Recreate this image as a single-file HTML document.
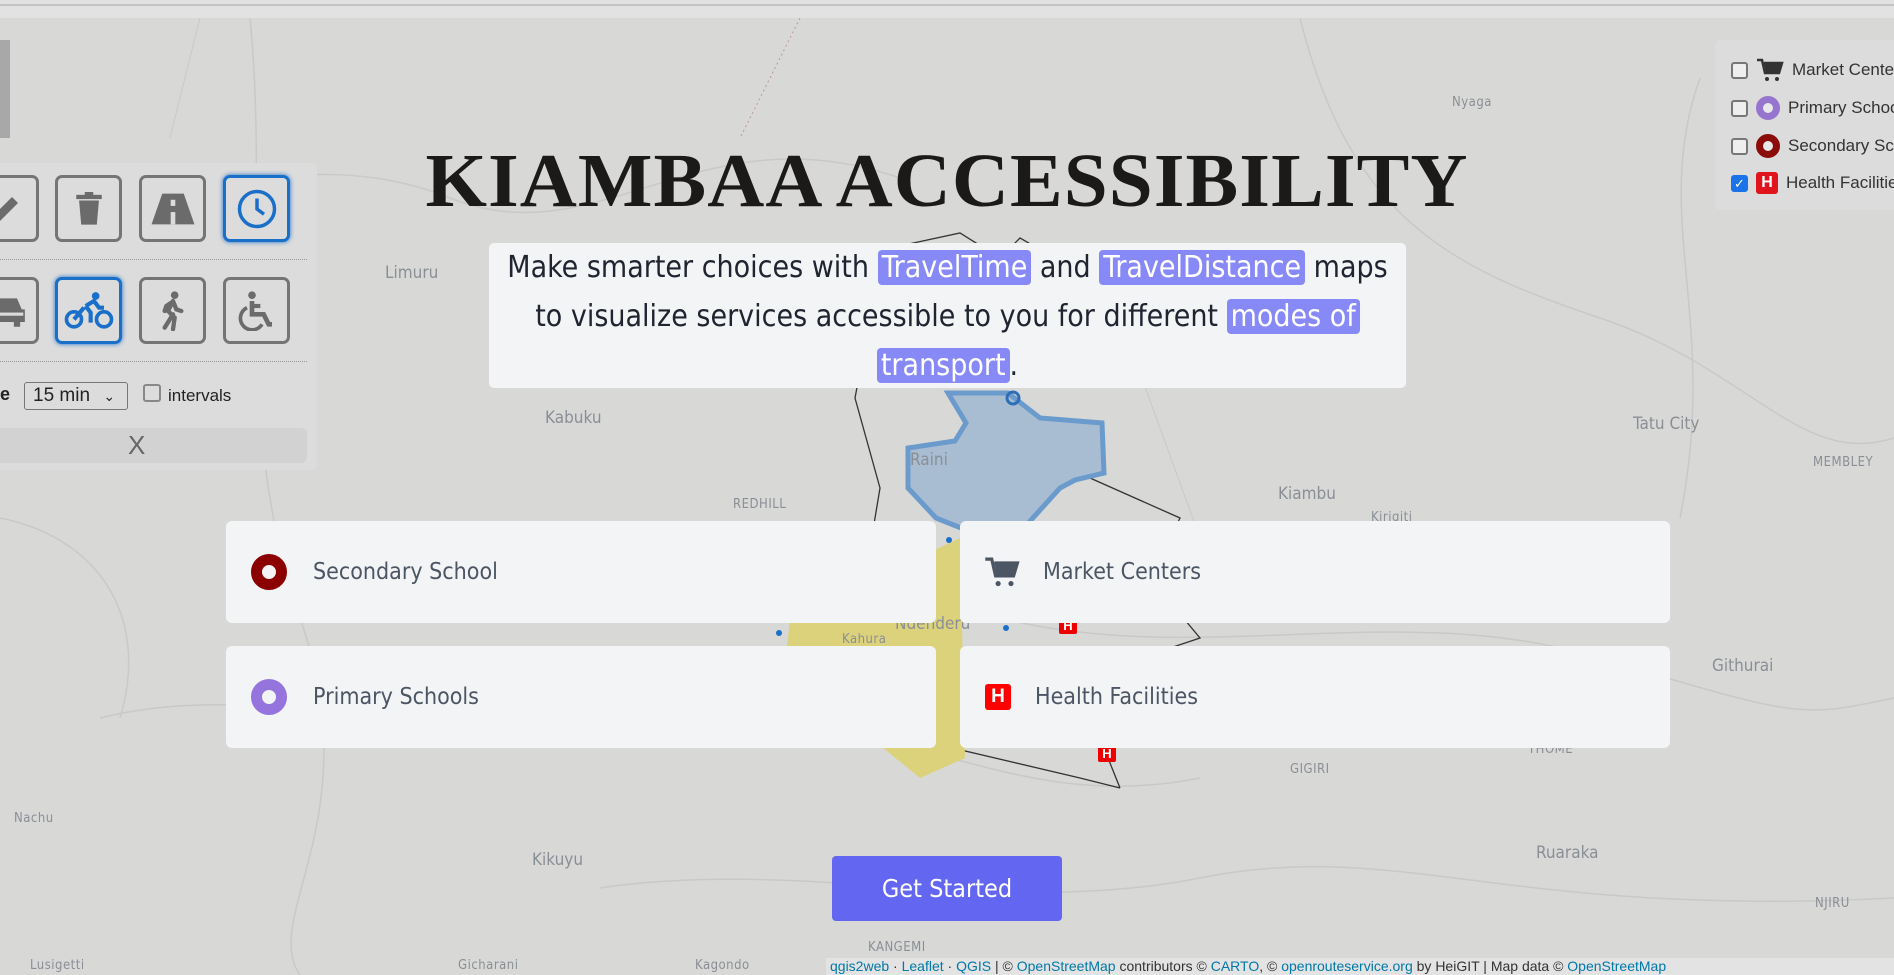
<!DOCTYPE html>
<html><head><meta charset="utf-8"><style>
*{margin:0;padding:0;box-sizing:border-box}
body{width:1894px;height:975px;overflow:hidden;background:#d8d8d6;font-family:"Liberation Sans",sans-serif;position:relative}
.abs{position:absolute}
.lbl{position:absolute;color:#8a8f96;font-size:17px;font-family:"DejaVu Sans Condensed","Liberation Sans",sans-serif}
.sm{font-size:13px;letter-spacing:.5px}
.btn{position:absolute;width:67px;height:67px;border:3px solid #757575;border-radius:7px;background:#dcdcdc;display:flex;align-items:center;justify-content:center}
.btn.on{border-color:#1a6fc9;box-shadow:0 0 5px #1a6fc9}
.card{position:absolute;background:#f3f4f6;border-radius:6px;width:710px;height:102px;display:flex;align-items:center;font-family:"DejaVu Sans Condensed","Liberation Sans",sans-serif;font-size:23px;color:#4b5563}
.hl{background:#8789f6;color:#fff;border-radius:4px;padding:0 4px}
.leg{position:absolute;left:1731px;font-size:17px;color:#333;display:flex;align-items:center;gap:8px;white-space:nowrap}
.cb{width:17px;height:17px;border:2px solid #777;border-radius:3px;background:#eee;flex:none}
</style></head><body>
<div class="abs" style="left:0;top:0;width:1894px;height:18px;background:#e2e2e2"></div>
<div class="abs" style="left:0;top:4px;width:1894px;height:2px;background:#c4c4c4"></div>

<svg class="abs" style="left:0;top:18px" width="1894" height="957">
 <g fill="none" stroke="#c9c9c7" stroke-width="1.5">
  <path d="M0 150 C200 200 300 120 450 180 S700 90 900 160"/>
  <path d="M250 0 C270 200 230 400 300 600 S260 900 300 957"/>
  <path d="M100 700 C300 650 500 760 700 720 S1000 800 1200 760"/>
  <path d="M1300 0 C1350 200 1450 250 1600 300 S1800 450 1894 420"/>
  <path d="M1000 600 C1200 650 1400 580 1600 640 S1800 700 1894 680"/>
  <path d="M600 870 C800 840 1000 900 1200 860 S1500 900 1894 880"/>
  <path d="M0 500 C100 520 150 600 120 700"/>
  <path d="M1700 60 C1650 200 1720 300 1680 500"/>
 </g>
 <path d="M200 0 L170 120 M 1120 300 L1200 520" stroke="#c9c9c7"/>
 <path d="M870 300 L890 230 L960 215 L1000 240 L1020 220 L1080 255 L1150 270 M870 300 L855 380 L880 470 L865 560 L870 650 M1090 460 L1180 500 L1150 560 L1200 620 L1140 640 L1100 720 L1120 770 M880 680 L910 720 L1080 760 L1120 770" fill="none" stroke="#333" stroke-width="1.3"/>
 <path d="M948 375 L1008 375 L1040 400 L1102 405 L1104 455 L1075 462 L1060 470 L1022 512 L966 512 L936 500 L908 470 L908 430 L955 423 L966 405 Z" fill="#a9bdd2" stroke="#6a9bcc" stroke-width="5"/>
 <circle cx="1013" cy="380" r="6" fill="none" stroke="#2d6fb5" stroke-width="3"/>
 <path d="M790 600 L960 520 L965 740 L920 760 L785 650 Z" fill="#dcd27c"/>
 <circle cx="949" cy="522" r="3" fill="#1a6fc9"/><circle cx="779" cy="615" r="3" fill="#1a6fc9"/><circle cx="1006" cy="610" r="3" fill="#1a6fc9"/>
 <rect x="1059" y="598" width="18" height="18" fill="#e00" rx="2"/><text x="1068" y="612" font-size="13" fill="#fff" text-anchor="middle" font-weight="bold">H</text>
 <rect x="1098" y="726" width="18" height="18" fill="#e00" rx="2"/><text x="1107" y="740" font-size="13" fill="#fff" text-anchor="middle" font-weight="bold">H</text>
 <path d="M800 0 L740 120" stroke="#b99" stroke-dasharray="2 3" fill="none"/>
</svg>

<div class="lbl" style="left:385px;top:263px">Limuru</div>
<div class="lbl" style="left:545px;top:408px">Kabuku</div>
<div class="lbl sm" style="left:1452px;top:95px">Nyaga</div>
<div class="lbl" style="left:1633px;top:414px">Tatu City</div>
<div class="lbl sm" style="left:1813px;top:455px">MEMBLEY</div>
<div class="lbl" style="left:1278px;top:484px">Kiambu</div>
<div class="lbl sm" style="left:1371px;top:510px">Kiriqiti</div>
<div class="lbl" style="left:1712px;top:656px">Githurai</div>
<div class="lbl sm" style="left:733px;top:497px">REDHILL</div>
<div class="lbl" style="left:910px;top:450px">Raini</div>
<div class="lbl" style="left:895px;top:614px">Ndenderu</div>
<div class="lbl sm" style="left:842px;top:632px">Kahura</div>
<div class="lbl sm" style="left:14px;top:811px">Nachu</div>
<div class="lbl" style="left:532px;top:850px">Kikuyu</div>
<div class="lbl" style="left:1536px;top:843px">Ruaraka</div>
<div class="lbl sm" style="left:1815px;top:896px">NJIRU</div>
<div class="lbl sm" style="left:1290px;top:762px">GIGIRI</div>
<div class="lbl sm" style="left:1528px;top:742px">THOME</div>
<div class="lbl sm" style="left:868px;top:940px">KANGEMI</div>
<div class="lbl sm" style="left:30px;top:958px">Lusigetti</div>
<div class="lbl sm" style="left:458px;top:958px">Gicharani</div>
<div class="lbl sm" style="left:695px;top:958px">Kagondo</div>

<div class="abs" style="left:0;top:40px;width:10px;height:98px;background:#a8a8a8"></div>

<div class="abs" style="left:0;top:163px;width:317px;height:307px;background:#dcdcdc;border-radius:0 6px 6px 0"></div>
<div class="btn" style="left:-28px;top:175px"><svg width="36" height="36" viewBox="0 0 24 24"><path d="M3 21l1-5L16 4l4 4L8 20z" fill="#6b6b6b"/></svg></div>
<div class="btn" style="left:55px;top:175px"><svg width="34" height="38" viewBox="0 0 24 26"><rect x="3" y="3" width="18" height="3" fill="#6b6b6b"/><rect x="9" y="1" width="6" height="3" fill="#6b6b6b"/><path d="M5 7h14l-1.5 17h-11z" fill="#6b6b6b"/></svg></div>
<div class="btn" style="left:139px;top:175px"><svg width="46" height="36" viewBox="0 0 30 22"><path d="M8 1h14l7 20H1z" fill="#6b6b6b"/><rect x="13.5" y="5" width="3" height="4" fill="#dcdcdc"/><rect x="13.5" y="13" width="3" height="8" fill="#dcdcdc"/></svg></div>
<div class="btn on" style="left:223px;top:175px"><svg width="42" height="42" viewBox="0 0 24 24"><circle cx="12" cy="12" r="10" fill="none" stroke="#1a6fc9" stroke-width="2"/><path d="M12 6v6l4 3" fill="none" stroke="#1a6fc9" stroke-width="2"/></svg></div>
<div class="abs" style="left:0;top:259px;width:307px;border-top:1px dotted #999"></div>
<div class="btn" style="left:-28px;top:277px"><svg width="44" height="34" viewBox="0 0 28 20"><path d="M4 9l3-7h14l3 7h2v8h-3v3h-4v-3H9v3H5v-3H2V9z" fill="#6b6b6b"/><rect x="3" y="11" width="22" height="2" fill="#dcdcdc"/></svg></div>
<div class="btn on" style="left:55px;top:277px"><svg width="50" height="40" viewBox="0 0 30 24"><circle cx="6" cy="17" r="4.5" fill="none" stroke="#1a6fc9" stroke-width="2.2"/><circle cx="24" cy="17" r="4.5" fill="none" stroke="#1a6fc9" stroke-width="2.2"/><circle cx="19" cy="3" r="2.3" fill="#1a6fc9"/><path d="M13 9l5-3 3 4h3M13 9l3 4v6M6 17l6-7" fill="none" stroke="#1a6fc9" stroke-width="2.5"/></svg></div>
<div class="btn" style="left:139px;top:277px"><svg width="30" height="40" viewBox="0 0 18 24"><circle cx="10" cy="2.5" r="2.3" fill="#6b6b6b"/><path d="M9 6l-3 6 4 4-1 7M9 6l2 5 3 1M9 14l-5 8M8 7L5 9 4 12" fill="none" stroke="#6b6b6b" stroke-width="2.6" stroke-linecap="round"/></svg></div>
<div class="btn" style="left:223px;top:277px"><svg width="40" height="40" viewBox="0 0 24 24"><circle cx="9" cy="2.5" r="2.3" fill="#6b6b6b"/><path d="M9 6v8h7l3 6h2" fill="none" stroke="#6b6b6b" stroke-width="2.8"/><path d="M6 10a7 7 0 1 0 9 10" fill="none" stroke="#6b6b6b" stroke-width="2.2"/><path d="M9 9h5" stroke="#6b6b6b" stroke-width="2.5"/></svg></div>
<div class="abs" style="left:0;top:361px;width:307px;border-top:1px dotted #999"></div>
<div class="abs" style="left:0;top:384px;font-size:18px;font-weight:bold;color:#222">e</div>
<div class="abs" style="left:24px;top:382px;width:104px;height:28px;border:1px solid #777;border-radius:3px;background:#dcdcdc;font-size:19px;padding:2px 8px;color:#222">15 min <span style="font-size:14px;margin-left:8px">&#8964;</span></div>
<div class="abs" style="left:143px;top:384px;width:18px;height:18px;border:2px solid #888;border-radius:3px"></div>
<div class="abs" style="left:168px;top:386px;font-size:17px;color:#222">intervals</div>
<div class="abs" style="left:0;top:428px;width:307px;height:35px;background:#d2d2d2;border-radius:0 6px 6px 0;font-size:26px;color:#666;line-height:35px"><span style="position:absolute;left:128px">X</span></div>

<div class="abs" style="left:1715px;top:40px;width:179px;height:170px;background:#dcdcdc;border-radius:6px 0 0 6px;overflow:hidden"></div>
<div class="leg" style="top:58px"><div class="cb"></div><svg width="28" height="24" viewBox="0 0 28 24"><path d="M1 2h5l3 13h14l3-10H8" fill="none" stroke="#333" stroke-width="2.5"/><path d="M8 5h17l-3 10H10z" fill="#333"/><circle cx="11" cy="21" r="2" fill="#333"/><circle cx="21" cy="21" r="2" fill="#333"/></svg><span>Market Centers</span></div>
<div class="leg" style="top:96px"><div class="cb"></div><div style="width:24px;height:24px;border-radius:50%;border:7px solid #9575cd;background:#e8e8e8;flex:none"></div><span>Primary Schools</span></div>
<div class="leg" style="top:134px"><div class="cb"></div><div style="width:24px;height:24px;border-radius:50%;border:7px solid #8b0a0a;background:#e8e8e8;flex:none"></div><span>Secondary Schools</span></div>
<div class="leg" style="top:172px"><div class="cb" style="background:#1a73e8;border-color:#1a73e8;color:#fff;font-size:13px;line-height:13px;text-align:center">✓</div><div style="width:22px;height:22px;border-radius:3px;background:#e0141c;color:#fff;font-weight:bold;font-size:16px;text-align:center;line-height:22px;flex:none">H</div><span>Health Facilities</span></div>

<div class="abs" style="left:0;top:138px;width:1894px;text-align:center;font-family:'Liberation Serif',serif;font-weight:bold;font-size:76px;color:#1c1a18;letter-spacing:1px;transform:scaleX(1.04)">KIAMBAA ACCESSIBILITY</div>

<div class="abs" style="left:489px;top:243px;width:917px;height:145px;background:#f3f4f6;border-radius:5px;text-align:center;font-family:'DejaVu Sans Condensed','Liberation Sans',sans-serif;font-size:30px;line-height:49px;color:#1f2430;white-space:nowrap">Make smarter choices with <span class="hl">TravelTime</span> and <span class="hl">TravelDistance</span> maps<br>to visualize services accessible to you for different <span class="hl">modes of</span><br><span class="hl">transport</span>.</div>

<div class="card" style="left:226px;top:521px"><div style="margin-left:25px;width:36px;height:36px;border-radius:50%;border:11px solid #8b0000;background:#f3f4f6"></div><span style="margin-left:26px">Secondary School</span></div>
<div class="card" style="left:960px;top:521px"><svg style="margin-left:24px" width="36" height="32" viewBox="0 0 28 24"><path d="M1 2h5l3 13h14l3-10H8" fill="none" stroke="#4b5563" stroke-width="2.5"/><path d="M8 5h17l-3 10H10z" fill="#4b5563"/><circle cx="11" cy="21" r="2" fill="#4b5563"/><circle cx="21" cy="21" r="2" fill="#4b5563"/></svg><span style="margin-left:23px">Market Centers</span></div>
<div class="card" style="left:226px;top:646px"><div style="margin-left:25px;width:36px;height:36px;border-radius:50%;border:11px solid #9575dd;background:#f3f4f6"></div><span style="margin-left:26px">Primary Schools</span></div>
<div class="card" style="left:960px;top:646px"><div style="margin-left:25px;width:26px;height:26px;border-radius:3px;background:#f00;color:#fff;font-weight:bold;font-size:19px;text-align:center;line-height:26px;font-family:'Liberation Sans',sans-serif">H</div><span style="margin-left:24px">Health Facilities</span></div>

<div class="abs" style="left:832px;top:856px;width:230px;height:65px;background:#6366f1;border-radius:4px;color:#fff;font-size:25px;text-align:center;line-height:65px;font-family:'DejaVu Sans Condensed','Liberation Sans',sans-serif">Get Started</div>

<div class="abs" style="left:826px;top:958px;width:1068px;height:17px;background:rgba(235,235,235,.6);font-size:14px;color:#333;white-space:nowrap;overflow:hidden;padding-left:4px"><span style="color:#0078a8">qgis2web</span> · <span style="color:#0078a8">Leaflet</span> · <span style="color:#0078a8">QGIS</span> | © <span style="color:#0078a8">OpenStreetMap</span> contributors © <span style="color:#0078a8">CARTO</span>, © <span style="color:#0078a8">openrouteservice.org</span> by HeiGIT | Map data © <span style="color:#0078a8">OpenStreetMap</span></div>
</body></html>
